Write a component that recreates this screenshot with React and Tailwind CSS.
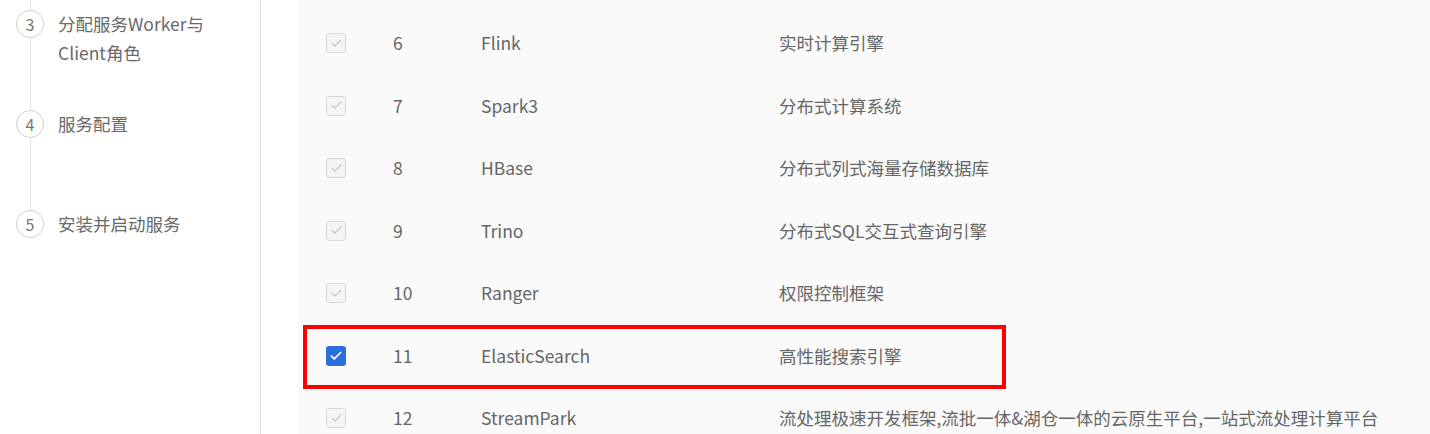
import { Check } from "lucide-react"

const steps = [
  { n: 3, lines: ["分配服务Worker与", "Client角色"] },
  { n: 4, lines: ["服务配置"] },
  { n: 5, lines: ["安装并启动服务"] },
]

const rows = [
  { id: 6, name: "Flink", desc: "实时计算引擎" },
  { id: 7, name: "Spark3", desc: "分布式计算系统" },
  { id: 8, name: "HBase", desc: "分布式列式海量存储数据库" },
  { id: 9, name: "Trino", desc: "分布式SQL交互式查询引擎" },
  { id: 10, name: "Ranger", desc: "权限控制框架" },
  { id: 11, name: "ElasticSearch", desc: "高性能搜索引擎", checked: true },
  { id: 12, name: "StreamPark", desc: "流处理极速开发框架,流批一体&湖仓一体的云原生平台,一站式流处理计算平台" },
]

function Step({ step, last }) {
  return (
    <div className="relative flex h-[100px] items-start gap-[14px] pl-4">
      {/* connector line */}
      {!last && <div className="absolute left-[30px] top-0 h-full w-px bg-[#e4e4e4]" />}
      {last && <div className="absolute left-[30px] top-0 h-[10px] w-px bg-[#e4e4e4]" />}
      <div className="relative z-10 mt-[10px] flex h-[28px] w-[28px] shrink-0 items-center justify-center rounded-full border border-[#cfcfcf] bg-white text-[16px] text-[#777]">
        {step.n}
      </div>
      <div className="mt-[9px] text-[17.5px] leading-[29px] text-[#6a6a6a]">
        {step.lines.map((l) => (
          <div key={l}>{l}</div>
        ))}
      </div>
    </div>
  )
}

function Row({ row }) {
  return (
    <div className="relative flex h-[62.5px] items-center text-[17.5px] text-[#666]">
      <div className="w-[95px] pl-[28px]">
        {row.checked ? (
          <div className="flex h-[20px] w-[20px] items-center justify-center rounded-[3px] bg-[#2b6fdc]">
            <Check size={14} strokeWidth={3} className="text-white" />
          </div>
        ) : (
          <div className="flex h-[20px] w-[20px] items-center justify-center rounded-[3px] border border-[#d9d9d9] bg-[#f5f5f5]">
            <Check size={13} strokeWidth={2} className="text-[#c4c4c4]" />
          </div>
        )}
      </div>
      <div className="w-[88px]">{row.id}</div>
      <div className="w-[298px]">{row.name}</div>
      <div className="whitespace-nowrap">{row.desc}</div>
      {row.checked && (
        <div className="pointer-events-none absolute left-[5px] top-0 h-[64px] w-[703px] border-4 border-[#ff0000]" />
      )}
    </div>
  )
}

export default function App() {
  return (
    <div
      className="flex h-[434px] w-[1430px] overflow-hidden bg-white"
      style={{ fontFamily: '"Noto Sans CJK SC", "Noto Sans", sans-serif' }}
    >
      <div className="w-[261px] shrink-0 border-r border-[#dedede]">
        {steps.map((s, i) => (
          <Step key={s.n} step={s} last={i === steps.length - 1} />
        ))}
      </div>
      <div className="w-[37px] shrink-0" />
      <div className="flex-1 bg-[#fafafa] pt-[12px]">
        {rows.map((r) => (
          <Row key={r.id} row={r} />
        ))}
      </div>
    </div>
  )
}
